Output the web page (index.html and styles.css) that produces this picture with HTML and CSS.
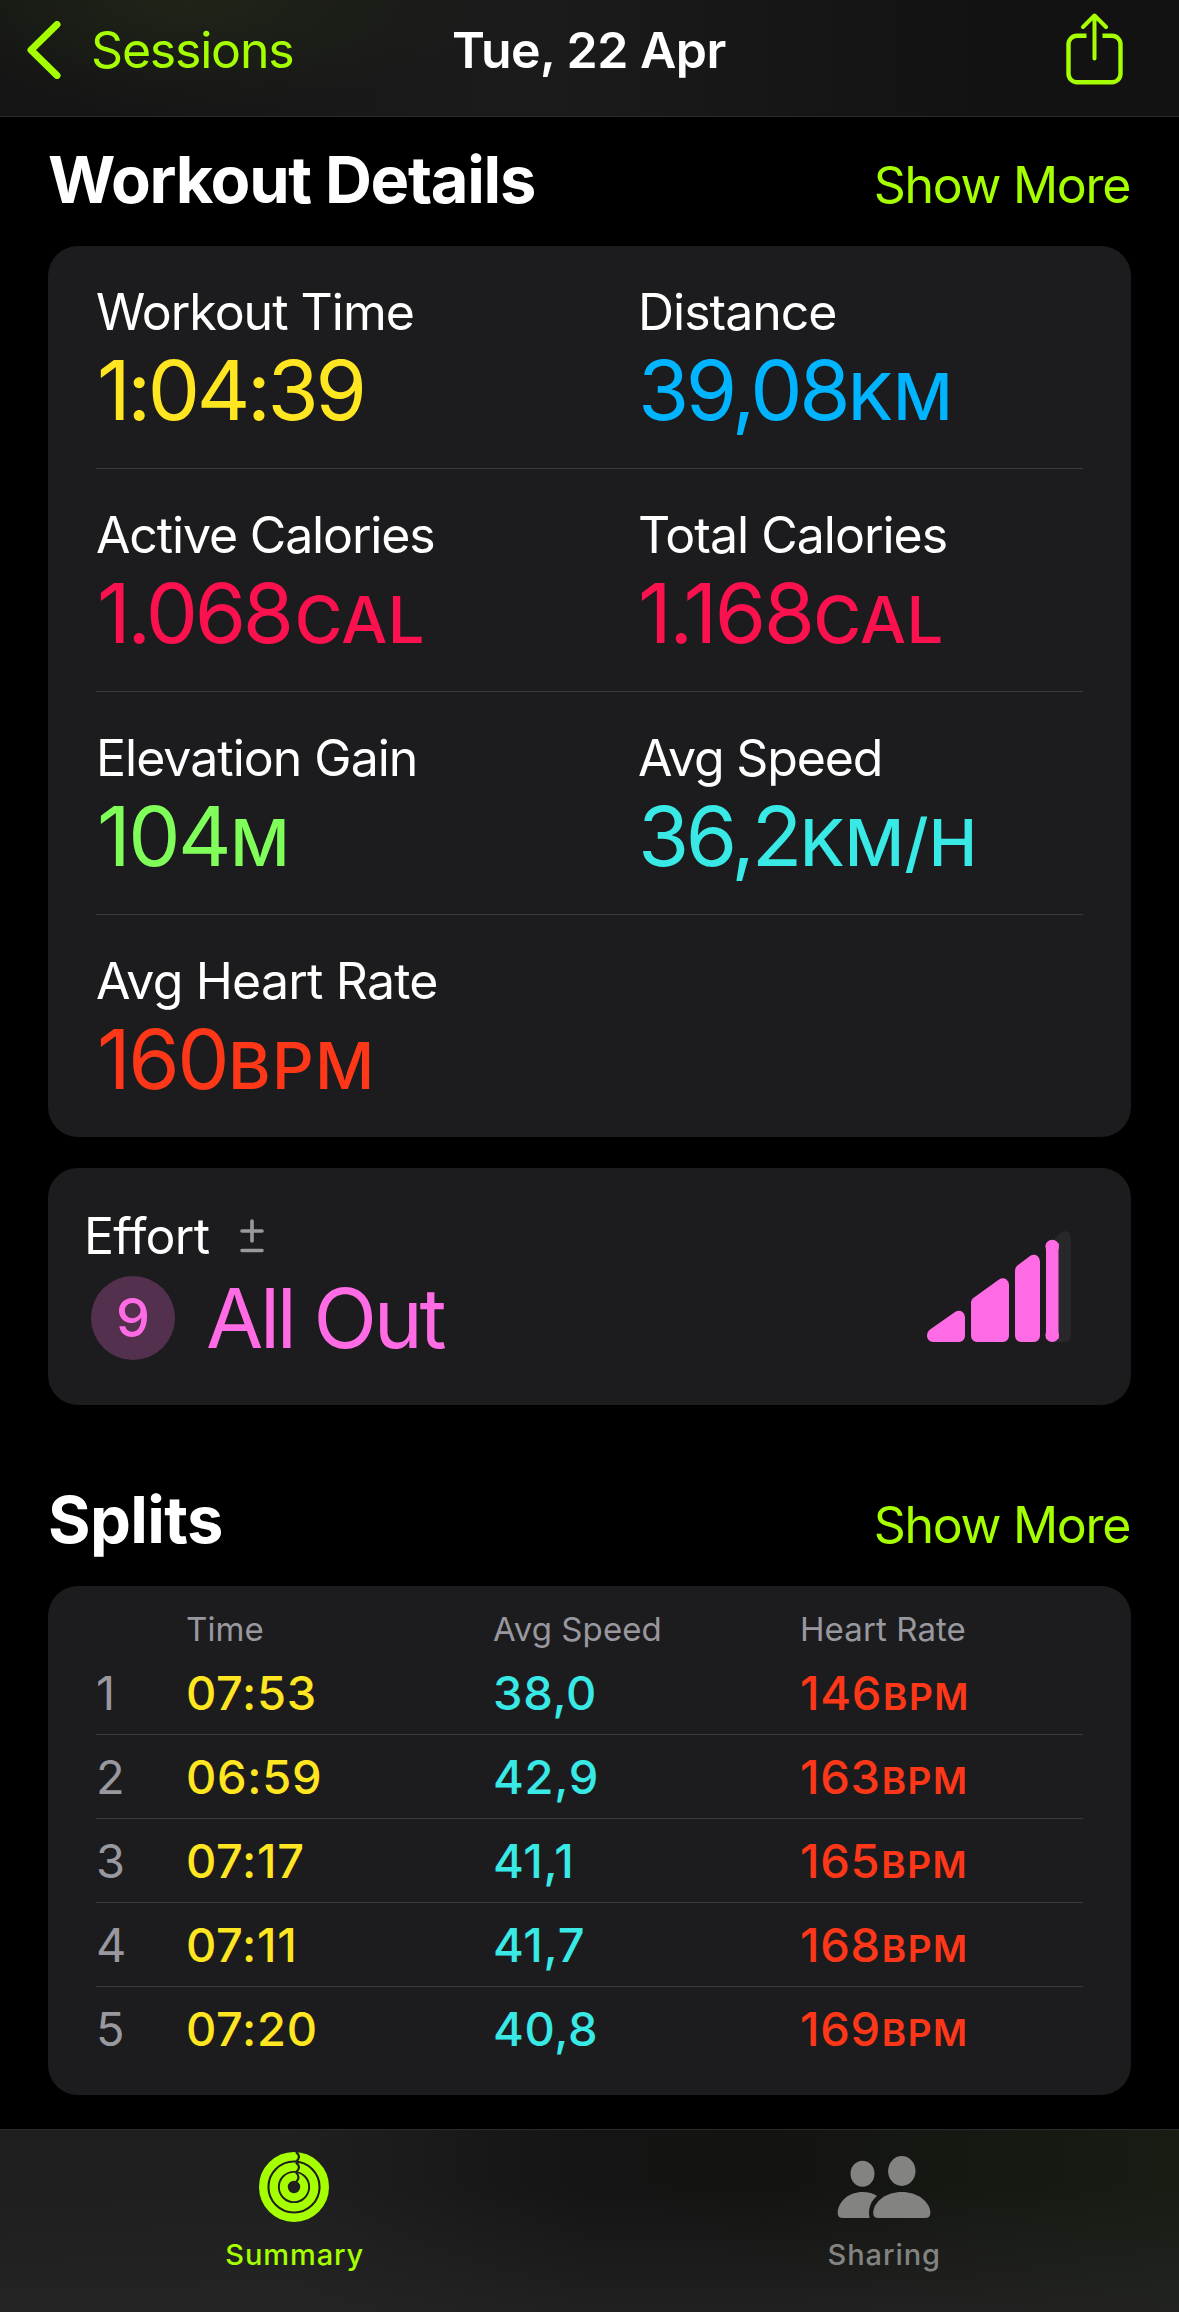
FILE: index.html
```
<!DOCTYPE html>
<html lang="en">
	<head>
		<meta charset="utf-8">
		<title>Workout</title>
		<link rel="stylesheet" href="styles.css">
	</head>
	<body>
		<header class="navbar">
			<a class="back">
				<svg width="34" height="58" viewBox="0 0 34 58"><path d="M30 3.5L4 29l26 25.5" fill="none" stroke="currentColor" stroke-width="7" stroke-linecap="round" stroke-linejoin="round"/></svg>
				Sessions
			</a>
			<h1>Tue, 22 Apr</h1>
			<a class="share">
				<svg width="58" height="72" viewBox="0 0 58 72" fill="none" stroke="currentColor" stroke-width="4.4" stroke-linejoin="round">
					<path d="M20.500 22.700H11a8.500 8.500 0 0 0-8.500 8.500v29.500A8.500 8.500 0 0 0 11 69.200h35a8.500 8.500 0 0 0 8.500-8.500V31.200a8.500 8.500 0 0 0-8.500-8.500h-9.500"/>
					<path d="M28.500 3v42.500M17 14L28.500 2.500 40 14" stroke-width="4" stroke-linecap="round"/>
				</svg>
			</a>
		</header>

		<main>
			<div class="heading">
				<h2>Workout Details</h2>
				<a>Show More</a>
			</div>
			<section class="card details">
				<div class="row">
					<div><div class="label">Workout Time</div><div class="value yellow">1:04:39</div></div>
					<div><div class="label">Distance</div><div class="value blue">39,08<span class="unit">KM</span></div></div>
				</div>
				<div class="row">
					<div><div class="label tight">Active Calories</div><div class="value pink">1.068<span class="unit cal">CAL</span></div></div>
					<div><div class="label">Total Calories</div><div class="value pink narrow">1.168<span class="unit">CAL</span></div></div>
				</div>
				<div class="row">
					<div><div class="label">Elevation Gain</div><div class="value green narrow">104<span class="unit">M</span></div></div>
					<div><div class="label tight">Avg Speed</div><div class="value cyan">36,2<span class="unit">KM/H</span></div></div>
				</div>
				<div class="row">
					<div><div class="label loose">Avg Heart Rate</div><div class="value red narrow">160<span class="unit bpm">BPM</span></div></div>
				</div>
			</section>

			<section class="card effort">
				<div>
					<div class="label effort-label">
						Effort
						<svg width="24" height="34" viewBox="0 0 24 34" stroke="#98989e" stroke-width="3.6" stroke-linecap="round"><path d="M12 2v20M2 12h20M2 31.500h20"/></svg>
					</div>
					<div class="effort-value">
						<span class="score">9</span>
						<span class="value">All Out</span>
					</div>
				</div>
				<!-- effort level bars, last one is half filled -->
				<svg width="144" height="111" viewBox="0 0 144 111">
					<path d="M120 16L133 2q5-4 9 0q2 2 2 5v98a6 6 0 0 1-6 6h-12z" fill="#28282a"/>
					<g fill="#ff6be4">
						<path d="M3 98.500L28 81q4-2.500 7.500 0q2.500 2 2.500 5v19a6 6 0 0 1-6 6H6a6 6 0 0 1-6-6q0-4.500 3-6.500z"/>
						<path d="M47 66.500L72 48.500q4-2.500 7.500 0q2.500 2 2.500 5.500v51a6 6 0 0 1-6 6H50a6 6 0 0 1-6-6V72q0-3.500 3-5.500z"/>
						<path d="M91 34L103 25q4-2.500 7.500 0q2.500 2 2.500 5.500V105a6 6 0 0 1-6 6H94a6 6 0 0 1-6-6V40q0-4 3-6z"/>
						<rect x="119" y="12" width="12.500" height="96"/>
						<circle cx="125.200" cy="15.600" r="6.800"/>
						<circle cx="125.200" cy="104.200" r="6.800"/>
					</g>
				</svg>
			</section>

			<div class="heading splits-heading">
				<h2 class="loose">Splits</h2>
				<a>Show More</a>
			</div>
			<section class="card splits">
				<div class="split head"><span></span><span>Time</span><span>Avg Speed</span><span>Heart Rate</span></div>
				<div class="split"><span class="num">1</span><span class="yellow">07:53</span><span class="cyan">38,0</span><span class="red">146<small>BPM</small></span></div>
				<div class="split"><span class="num">2</span><span class="yellow">06:59</span><span class="cyan">42,9</span><span class="red">163<small>BPM</small></span></div>
				<div class="split"><span class="num">3</span><span class="yellow">07:17</span><span class="cyan">41,1</span><span class="red">165<small>BPM</small></span></div>
				<div class="split"><span class="num">4</span><span class="yellow">07:11</span><span class="cyan">41,7</span><span class="red">168<small>BPM</small></span></div>
				<div class="split"><span class="num">5</span><span class="yellow">07:20</span><span class="cyan">40,8</span><span class="red">169<small>BPM</small></span></div>
			</section>
		</main>

		<nav class="tabbar">
			<a class="tab active">
				<svg width="70" height="70" viewBox="0 0 70 70" fill="none">
					<g stroke="currentColor">
						<circle cx="35" cy="35" r="30.800" stroke-width="8.400"/>
						<circle cx="35" cy="35" r="20.300" stroke-width="8.400"/>
						<circle cx="35" cy="35" r="10.200" stroke-width="8"/>
					</g>
					<!-- rounded ends of the rings -->
					<path d="M37 0q6 4.500 0 9.500M37 10.500q6 4.500 0 9.500M37 20.500q5 4.500 0 9.500" stroke="#20201f" stroke-width="2.200"/>
				</svg>
				Summary
			</a>
			<a class="tab">
				<svg width="94" height="70" viewBox="0 0 94 70" fill="currentColor">
					<ellipse cx="25.500" cy="21.800" rx="12" ry="13"/>
					<ellipse cx="64.800" cy="19" rx="13.700" ry="15"/>
					<path d="M6 66q-5.500 0-5.300-5.500C1.500 49 12 40 25.500 40q9 0 14.500 4C33 50 31 57 32.500 66z"/>
					<path d="M41.500 66q-5.500 0-5.300-5.500C37 49 49.500 40 64.800 40S92.500 49 93.400 60.500Q93.500 66 88 66z"/>
				</svg>
				Sharing
			</a>
		</nav>
	</body>
</html>
```
FILE: styles.css
```
* { box-sizing: border-box; }
body {
	margin: 0;
	min-height: 100vh;
	display: flex;
	flex-direction: column;
	background: #000;
	color: #fff;
	font: 50px/60px Inter, "Liberation Sans", sans-serif;
}
h1, h2 { margin: 0; }
svg { display: block; flex: none; }
main { flex: 1; }

.navbar {
	display: grid;
	grid-template-columns: 1fr auto 1fr;
	align-items: center;
	height: 117px;
	padding: 0 55px 16px 27px;
	border-bottom: 1px solid #2a2a2a;
	background: radial-gradient(ellipse 300px 110px at 190px 0, #1f2417, transparent), linear-gradient(90deg, #141414, #1b1b1b 45%, #121212 85%);
	line-height: 100px;
}
.navbar h1 {
	font-size: 50px;
	font-weight: 600;
	letter-spacing: -.5px;
	/* side paddings differ, keep the title in the middle */
	margin-left: 27px;
}
.back {
	display: flex;
	align-items: center;
	gap: 30px;
	color: #a6ff00;
	letter-spacing: -1.200px;
}
.share {
	justify-self: end;
	padding-bottom: 3px;
	color: #a6ff00;
}

.heading {
	display: flex;
	justify-content: space-between;
	align-items: baseline;
	padding: 23px 49px 26px 48px;
	line-height: 80px;
}
.heading h2 {
	font-size: 65px;
	font-weight: 700;
	letter-spacing: -1.300px;
}
.heading h2.loose { letter-spacing: -.6px; }
.heading a { color: #a6ff00; letter-spacing: -1.300px; line-height: 60px; }
.splits-heading { padding-top: 75px; }

.card {
	margin: 0 48px;
	background: #1c1c1e;
	border-radius: 30px;
}
.details { padding: 0 48px; }
.row {
	display: grid;
	grid-template-columns: 542px 1fr;
	height: 223px;
	padding-top: 36px;
	border-bottom: 1px solid #3a3a3c;
}
.row:last-child { height: 222px; border: 0; }
.label { letter-spacing: -1px; white-space: nowrap; }
.label.tight { letter-spacing: -1.150px; }
.label.loose { letter-spacing: -.800px; }
.value {
	font-size: 83px;
	line-height: 96px;
	letter-spacing: -3.400px;
	white-space: nowrap;
}
.value.narrow { letter-spacing: -2.500px; }
.row .value { padding-left: 1px; }
.row > div + div .value { padding-left: 0; }
.unit {
	margin-left: 1px;
	font-size: 65px;
	font-weight: 500;
	line-height: 1;
	letter-spacing: .300px;
}
.unit.cal { margin-left: 4px; }
.unit.bpm { letter-spacing: 1.200px; }

.yellow { color: #ffe620; }
.blue { color: #00b4ff; }
.pink { color: #fc114f; }
.green { color: #80ff5a; }
.cyan { color: #38e9e5; }
.red { color: #ff3719; }

.effort {
	display: flex;
	justify-content: space-between;
	align-items: center;
	height: 237px;
	margin-top: 31px;
	padding: 0 60px 0 36px;
}
.effort > div { height: 161px; }
.effort-label {
	display: flex;
	align-items: center;
	gap: 31px;
	letter-spacing: -.700px;
}
.effort-value {
	display: flex;
	gap: 31px;
	margin-top: 10px;
	padding-left: 7px;
	color: #ff6be4;
}
.effort-value .value { line-height: 84px; letter-spacing: -3.300px; }
.score {
	width: 84px;
	height: 84px;
	border-radius: 50%;
	background: #53304e;
	font-size: 54px;
	font-weight: 500;
	line-height: 84px;
	text-align: center;
}

.splits { padding: 23px 48px 24px; }
.split {
	display: grid;
	grid-template-columns: 90px 307px 307px 1fr;
	height: 84px;
	border-bottom: 1px solid #3a3a3c;
	font-size: 47px;
	font-weight: 500;
	line-height: 83px;
	letter-spacing: .700px;
}
.split:last-child { border: 0; }
.split .num { color: #98989e; font-weight: 400; }
.split small {
	margin-left: 1px;
	font-size: 37px;
	font-weight: 600;
	line-height: 1;
	letter-spacing: 1.500px;
}
.split.head {
	height: 42px;
	border: 0;
	color: #98989e;
	font-size: 33px;
	font-weight: 400;
	line-height: 40px;
	letter-spacing: .100px;
}

.tabbar {
	display: grid;
	grid-template-columns: 1fr 1fr;
	height: 183px;
	padding-top: 22px;
	border-top: 1px solid #2c2c2c;
	background: linear-gradient(transparent 30%, rgba(40, 40, 42, .6)), linear-gradient(90deg, #1e1e1e, #1f1f1f 25%, #141414 50%, #131411 65%, #181c13);
}
.tab {
	display: flex;
	flex-direction: column;
	align-items: center;
	gap: 15px;
	color: #838481;
	font-size: 29px;
	font-weight: 500;
	line-height: 36px;
	letter-spacing: .900px;
}
.tab.active { color: #a6ff00; }
.tab.active svg { margin-right: 2px; }
```
